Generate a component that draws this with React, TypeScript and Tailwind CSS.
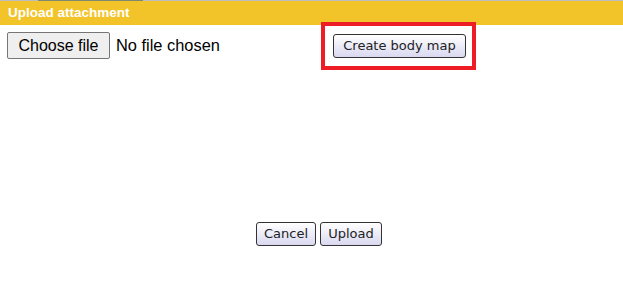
import React from 'react';

const btn =
  "h-[24px] rounded-[3px] border border-[#333] bg-gradient-to-b from-white to-[#d9d8f0] text-[#222] leading-none font-['DejaVu_Sans',Tahoma,sans-serif]";

export default function App() {
  return (
    <div className="w-[623px] h-[288px] bg-white font-['Liberation_Sans',Arial,sans-serif] overflow-hidden">
      <div className="h-px bg-[#bdbdbd] flex">
        <div className="ml-[38px] w-[105px] bg-[#7d8a6f]" />
      </div>
      <div className="h-[24px] bg-[#f2c42a] flex items-center px-[8px]">
        <span className="text-white font-bold text-[13.5px]">Upload attachment</span>
      </div>
      <div className="flex items-start">
        <div className="w-[321px] flex items-center pl-[7px] pt-[7px]">
          <button className="h-[27px] w-[103px] rounded-[2px] border border-[#767676] bg-[#efefef] text-[16px] text-black">
            Choose file
          </button>
          <span className="ml-[6px] text-[16.4px] text-black">No file chosen</span>
        </div>
        <div className="mt-[-3px] w-[155px] border-[4px] border-[#ee1c25] pl-[8px] pt-[7px] pb-[8px]">
          <button className={`${btn} w-[133px] text-[13px]`}>Create body map</button>
        </div>
      </div>
      <div className="flex justify-center gap-[4px] mt-[152px] pl-[15px]">
        <button className={`${btn} w-[60px] text-[13px]`}>Cancel</button>
        <button className={`${btn} w-[62px] text-[13px]`}>Upload</button>
      </div>
    </div>
  );
}
